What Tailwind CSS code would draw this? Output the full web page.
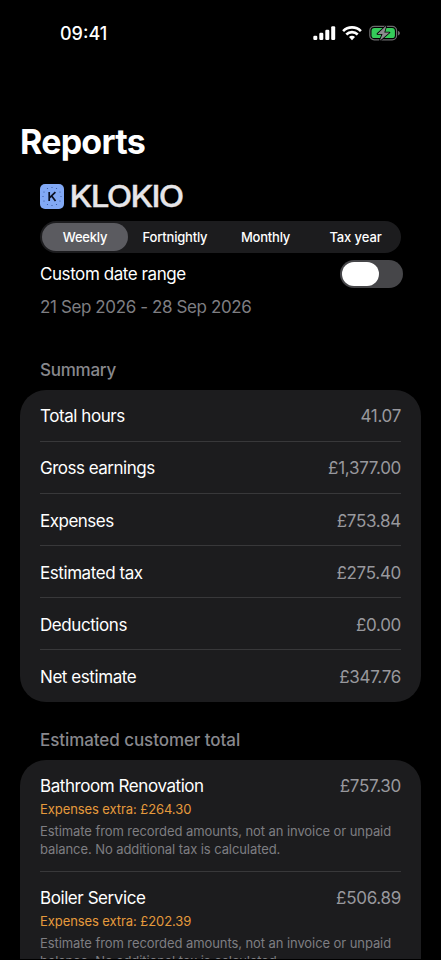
<!DOCTYPE html>
<html lang="en">
<head>
<meta charset="utf-8">
<meta name="viewport" content="width=device-width, initial-scale=1">
<title>Reports</title>
<script src="https://cdn.jsdelivr.net/npm/@tailwindcss/browser@4"></script>
</head>
<body class="bg-black">
<div class="relative w-[441px] h-[960px] overflow-hidden bg-black font-['Inter',sans-serif] text-[17px] leading-[22px] tracking-[-0.43px] text-white flex flex-col">
  <!-- Status bar -->
  <div class="h-[66px] shrink-0 flex justify-between pl-[60px] pr-[40px]">
    <div class="pt-[23px] text-[18px] font-[550] tracking-[0px]">09:41</div>
    <div class="pt-[24px] flex items-start">
      <svg class="w-[23px] h-[18px]" viewBox="0 0 23 18" fill="#fff"><rect x="0.3" y="11.7" width="4" height="4.3" rx="1.2"/><rect x="6.3" y="8.8" width="4" height="7.2" rx="1.2"/><rect x="12.3" y="5.7" width="4" height="10.3" rx="1.2"/><rect x="18.2" y="2.3" width="4" height="13.7" rx="1.2"/></svg>
      <svg class="w-[20px] h-[18px] ml-[6px]" viewBox="0 0 20 18" fill="none" stroke="#fff" stroke-width="2.6"><path d="M1.1 7.1a12.6 12.6 0 0 1 17.8 0"/><path d="M4.3 10.5a8.1 8.1 0 0 1 11.4 0"/><path d="M10 16.2l-3-3.1a4.2 4.2 0 0 1 6 0z" fill="#fff" stroke="none"/></svg>
      <svg class="w-[32px] h-[18px] ml-[7px]" viewBox="0 0 32 18"><rect x="0.8" y="2.4" width="26.8" height="13.4" rx="4.4" fill="none" stroke="#6b6b6d" stroke-width="1.2"/><path d="M29 7v4.4c1.2-.4 1.9-1.2 1.9-2.2S30.2 7.4 29 7z" fill="#6b6b6d"/><rect x="2.5" y="4.1" width="23.4" height="10" rx="2.9" fill="#35cc5a"/><path d="M17.4 1.6L8.4 9.9h5.1l-2.7 6.9 9.7-8.3h-5.2z" fill="#8b8c8e" stroke="#000" stroke-width="1.6" stroke-linejoin="round" paint-order="stroke"/></svg>
    </div>
  </div>

  <h1 class="mt-[55px] ml-[20px] h-[42px] shrink-0 text-[34px] leading-[42px] font-bold tracking-[-0.75px]">Reports</h1>

  <div class="mt-[20px] ml-[40px] h-[27px] shrink-0 flex items-center">
    <svg class="w-[24px] h-[25px]" viewBox="0 0 24 25"><rect width="24" height="25" rx="5" fill="#82a9f5"/><g fill="#35529a"><circle cx="12" cy="3.5" r=".6"/><circle cx="16.5" cy="4.5" r=".6"/><circle cx="20" cy="8" r=".6"/><circle cx="21" cy="12.5" r=".6"/><circle cx="20" cy="17" r=".6"/><circle cx="16.5" cy="20.5" r=".6"/><circle cx="12" cy="21.5" r=".6"/><circle cx="7.5" cy="20.5" r=".6"/><circle cx="4" cy="17" r=".6"/><circle cx="3" cy="12.5" r=".6"/><circle cx="4" cy="8" r=".6"/><circle cx="7.5" cy="4.5" r=".6"/></g><path d="M9.2 8.1v8.9M15.4 8.1l-6 5.8M11.5 11.7l4 5.3" fill="none" stroke="#0b1020" stroke-width="1.7"/></svg>
    <svg class="w-[124px] h-[27px] ml-[4px] overflow-visible" viewBox="0 0 124 27"><text x="1.6" y="24" textLength="113" lengthAdjust="spacingAndGlyphs" font-family="Inter, sans-serif" font-size="30" font-weight="500" letter-spacing="-1.6" fill="#e6e5e8" stroke="#e6e5e8" stroke-width=".3">KLOKIO</text></svg>
  </div>

  <div class="mt-[11px] mx-[40px] h-[32px] shrink-0 rounded-full bg-[#1c1c1e] p-[2px] grid grid-cols-[86px_94px_87px_90px] text-[13px] leading-[28px] font-medium tracking-[-0.2px] text-center">
    <div class="rounded-full bg-[#5b5b60]">Weekly</div>
    <div>Fortnightly</div>
    <div>Monthly</div>
    <div class="pl-[3px] tracking-[-0.1px]">Tax year</div>
  </div>

  <div class="mt-[7px] ml-[40px] mr-[38px] h-[28px] shrink-0 flex items-center justify-between">
    <span>Custom date range</span>
    <div class="w-[63px] h-[28px] rounded-full bg-[#464649] p-[2px]"><div class="w-[37px] h-[24px] rounded-full bg-white"></div></div>
  </div>
  <div class="mt-[8px] ml-[40px] h-[22px] shrink-0 tracking-[-0.39px] text-[#7e7e82]">21 Sep 2026 - 28 Sep 2026</div>

  <h2 class="mt-[41px] ml-[40px] h-[22px] shrink-0 font-[550] tracking-[-0.25px] text-[#88888d]">Summary</h2>
  <div class="mt-[9px] mx-[20px] shrink-0 rounded-[26px] bg-[#1c1c1e] px-[20px] divide-y divide-[#38383a]">
    <div class="h-[52px] pt-px flex items-center justify-between"><span>Total hours</span><span class="text-[#98989d] tracking-[-0.3px]">41.07</span></div>
    <div class="h-[52px] pt-px flex items-center justify-between"><span class="tracking-[-0.5px]">Gross earnings</span><span class="text-[#98989d] tracking-[-0.3px]">£1,377.00</span></div>
    <div class="h-[52px] pt-[2px] flex items-center justify-between"><span class="tracking-[-0.5px]">Expenses</span><span class="text-[#98989d] tracking-[-0.3px]">£753.84</span></div>
    <div class="h-[52px] pt-[2px] flex items-center justify-between"><span>Estimated tax</span><span class="text-[#98989d] tracking-[-0.3px]">£275.40</span></div>
    <div class="h-[52px] pt-[2px] flex items-center justify-between"><span>Deductions</span><span class="text-[#98989d] tracking-[-0.3px]">£0.00</span></div>
    <div class="h-[52px] pt-px flex items-center justify-between"><span>Net estimate</span><span class="text-[#98989d] tracking-[-0.3px]">£347.76</span></div>
  </div>

  <h2 class="mt-[27px] ml-[40px] h-[22px] shrink-0 font-[550] tracking-[-0.07px] text-[#88888d]">Estimated customer total</h2>
  <div class="mt-[9px] mx-[20px] h-[199px] shrink-0 overflow-hidden rounded-t-[26px] bg-[#1c1c1e] px-[20px]">
    <div class="h-[111px] pt-[15px]">
      <div class="flex justify-between"><span>Bathroom Renovation</span><span class="text-[#98989d] tracking-[-0.3px]">£757.30</span></div>
      <div class="mt-[3px] text-[13px] leading-[18px] tracking-[-0.08px] text-[#e59a3c]">Expenses extra: £264.30</div>
      <div class="mt-[4px] text-[13px] leading-[18px] tracking-[-0.08px] text-[#7e7e82] whitespace-nowrap">Estimate from recorded amounts, not an invoice or unpaid<br>balance. No additional tax is calculated.</div>
    </div>
    <div class="h-[112px] pt-[15px] border-t border-[#38383a]">
      <div class="flex justify-between"><span>Boiler Service</span><span class="text-[#98989d] tracking-[-0.3px]">£506.89</span></div>
      <div class="mt-[3px] text-[13px] leading-[18px] tracking-[-0.08px] text-[#e59a3c]">Expenses extra: £202.39</div>
      <div class="mt-[4px] text-[13px] leading-[18px] tracking-[-0.08px] text-[#7e7e82] whitespace-nowrap">Estimate from recorded amounts, not an invoice or unpaid<br>balance. No additional tax is calculated.</div>
    </div>
  </div>
</div>
</body>
</html>
